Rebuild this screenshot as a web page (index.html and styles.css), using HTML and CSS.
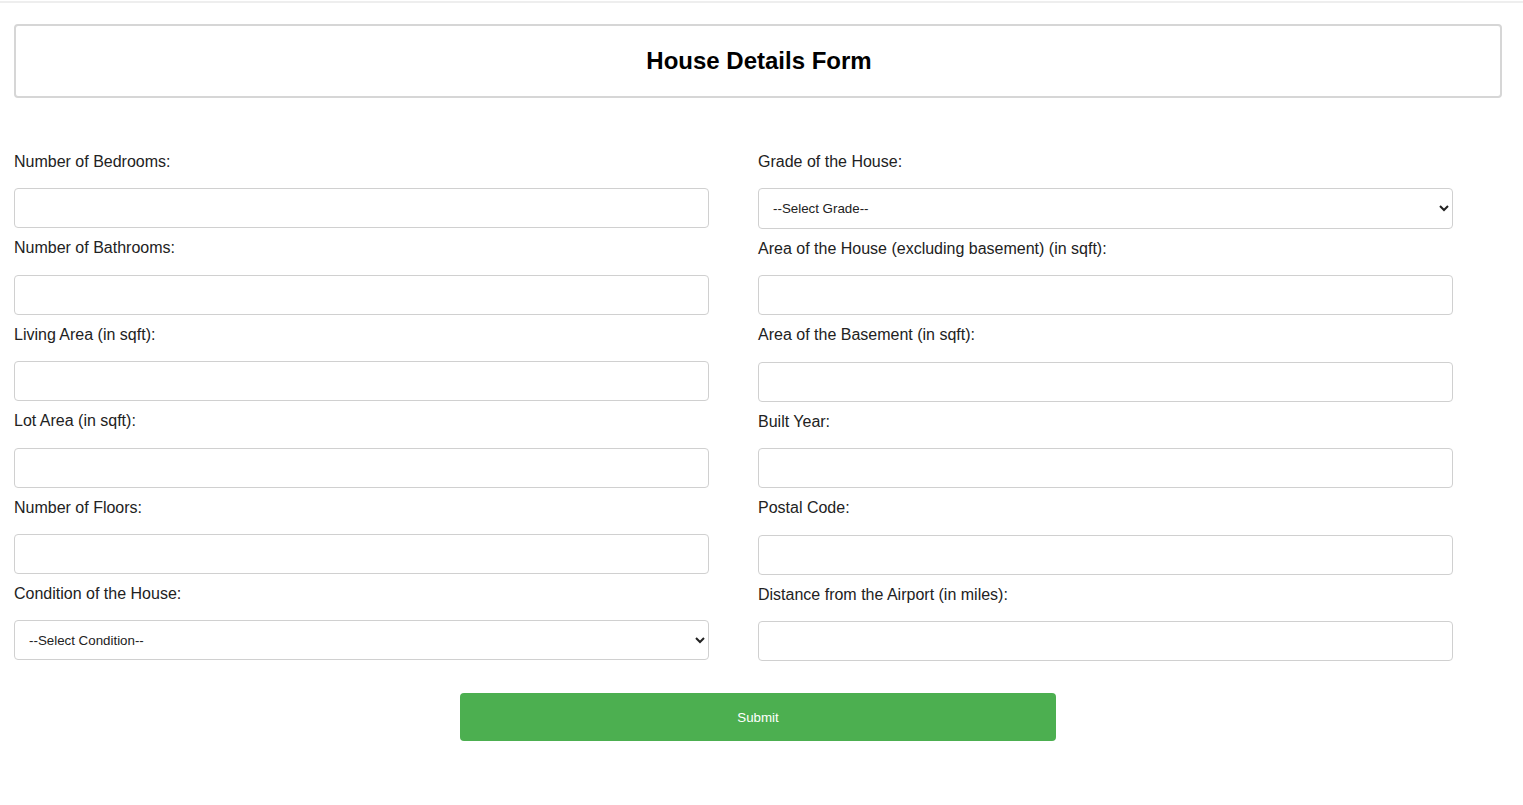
FILE: index.html
```html
<!DOCTYPE html>
<html lang="en">
<head>
<meta charset="utf-8">
<title>House Details Form</title>
<link rel="stylesheet" href="styles.css">
</head>
<body>
<div class="topline"></div>
<div class="page">
  <header class="title-box">
    <h1 class="title">House Details Form</h1>
  </header>
  <form class="house-form">
    <div class="columns">
      <div class="col">
        <div class="field"><label class="lbl">Number of Bedrooms:</label><input class="ctl" type="text"></div>
        <div class="field"><label class="lbl">Number of Bathrooms:</label><input class="ctl" type="text"></div>
        <div class="field"><label class="lbl">Living Area (in sqft):</label><input class="ctl" type="text"></div>
        <div class="field"><label class="lbl">Lot Area (in sqft):</label><input class="ctl" type="text"></div>
        <div class="field"><label class="lbl">Number of Floors:</label><input class="ctl" type="text"></div>
        <div class="field"><label class="lbl">Condition of the House:</label>
          <select class="ctl sel"><option>--Select Condition--</option></select></div>
      </div>
      <div class="col">
        <div class="field"><label class="lbl">Grade of the House:</label>
          <select class="ctl sel sel-top"><option>--Select Grade--</option></select></div>
        <div class="field"><label class="lbl">Area of the House (excluding basement) (in sqft):</label><input class="ctl" type="text"></div>
        <div class="field"><label class="lbl">Area of the Basement (in sqft):</label><input class="ctl" type="text"></div>
        <div class="field"><label class="lbl">Built Year:</label><input class="ctl" type="text"></div>
        <div class="field"><label class="lbl">Postal Code:</label><input class="ctl" type="text"></div>
        <div class="field"><label class="lbl">Distance from the Airport (in miles):</label><input class="ctl" type="text"></div>
      </div>
    </div>
    <div class="actions">
      <button type="button" class="submit">Submit</button>
    </div>
  </form>
</div>
</body>
</html>
```

FILE: styles.css
```css
html, body {
  margin: 0;
  padding: 0;
  background: #fff;
}
body {
  font-family: "Liberation Sans", Arial, sans-serif;
  color: #222;
}
.topline {
  margin-top: 1px;
  height: 0;
  border-top: 2px solid #eeeeee;
}
.page {
  width: 1488px;
  margin: 21px 0 0 14px;
}
.title-box {
  box-sizing: border-box;
  height: 74px;
  border: 2px solid #d6d6d6;
  border-radius: 4px;
  display: flex;
  align-items: center;
  justify-content: center;
}
.title {
  margin: 0 0 0 2px;
  font-size: 24px;
  line-height: 28px;
  font-weight: bold;
  color: #000;
}
.house-form {
  margin-top: 54px;
}
.columns {
  display: grid;
  grid-template-columns: 1fr 1fr;
}
.col {
  display: flex;
  flex-direction: column;
}
.field {
  display: flex;
  flex-direction: column;
}
.lbl {
  display: block;
  font-size: 16px;
  line-height: 18.4px;
  padding-top: 1px;
  margin-bottom: 17px;
  color: #222;
}
.ctl {
  box-sizing: border-box;
  width: calc(100% - 49px);
  height: 40px;
  margin: 0 0 10px 0;
  padding: 0 10px;
  border: 1px solid #d0d0d0;
  border-radius: 4px;
  background: #fff;
  font-family: "Liberation Sans", Arial, sans-serif;
  font-size: 13.333px;
  color: #222;
}
.sel {
  padding: 0 10px;
}
.sel-top {
  height: 41px;
  margin-bottom: 9.6px;
}
.actions {
  display: flex;
  justify-content: center;
  margin-top: 22px;
}
.submit {
  width: 40%;
  height: 48px;
  border: none;
  border-radius: 4px;
  background: #4caf50;
  color: #fff;
  font-family: "Liberation Sans", Arial, sans-serif;
  font-size: 13.333px;
  cursor: pointer;
}
```
